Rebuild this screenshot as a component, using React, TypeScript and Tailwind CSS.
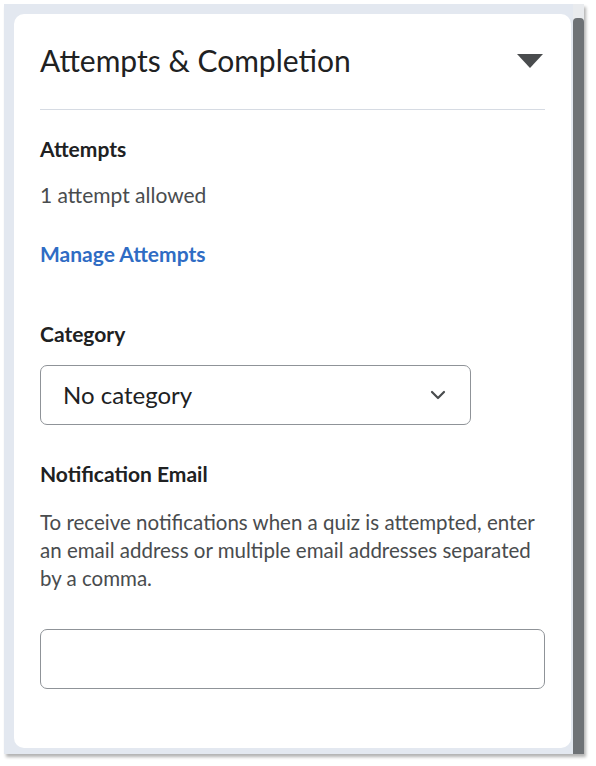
import React from "react";

export default function App() {
  return (
    <div className="w-[596px] h-[766px] bg-white" style={{ fontFamily: "Lato, 'Noto Sans', sans-serif" }}>
      <div className="ml-[4px] pt-[4px]">
        <div className="w-[580px] h-[750px] flex shadow-[2px_3px_3px_rgba(0,0,0,0.3)]">
          <div className="flex-1 bg-[#e3e8f0] pl-[10px] pt-[10px] pr-[2px] pb-[6px]">
            <div className="h-full bg-white rounded-[10px] pl-[26px] pr-[26px] pt-[30px]">
              <div className="flex items-center justify-between h-[32px]">
                <h2 className="text-[30px] leading-[32px] text-[#202122]">Attempts &amp; Completion</h2>
                <svg width="26" height="14" viewBox="0 0 26 14" className="mr-[2px] mt-[2px]">
                  <path d="M0 0 H26 L13 14 Z" fill="#494c4e" />
                </svg>
              </div>
              <div className="mt-[33px] h-px bg-[#d6dbe3]" />

              <div className="mt-[27px] text-[21px] leading-[24px] font-bold text-[#202122]">Attempts</div>
              <div className="mt-[22px] text-[21px] leading-[24px] text-[#494c4e]">1 attempt allowed</div>
              <div className="mt-[35px] text-[21px] leading-[24px] font-bold text-[#2f6cc4]">Manage Attempts</div>

              <div className="mt-[56px] text-[21px] leading-[24px] font-bold text-[#202122]">Category</div>
              <div className="mt-[19px] w-[431px] h-[60px] rounded-[7px] border border-[#8f9398] flex items-center justify-between pl-[22px] pr-[24px]">
                <span className="text-[24px] text-[#202122]">No category</span>
                <svg width="16" height="10" viewBox="0 0 16 10">
                  <path d="M2 2 L8 8 L14 2" fill="none" stroke="#494c4e" strokeWidth="2.2" strokeLinecap="round" strokeLinejoin="round" />
                </svg>
              </div>

              <div className="mt-[37px] text-[21px] leading-[24px] font-bold text-[#202122]">Notification Email</div>
              <p className="mt-[22px] text-[20.5px] leading-[28px] text-[#494c4e]">
                To receive notifications when a quiz is attempted, enter an email address or multiple email addresses separated by a comma.
              </p>
              <div className="mt-[37px] w-[505px] h-[60px] rounded-[7px] border border-[#8f9398]" />
            </div>
          </div>
          <div className="w-[11px] bg-[#e9ebee] pt-[14px]">
            <div className="h-full rounded-t-[4px] bg-[#6e7276]" />
          </div>
        </div>
      </div>
    </div>
  );
}
